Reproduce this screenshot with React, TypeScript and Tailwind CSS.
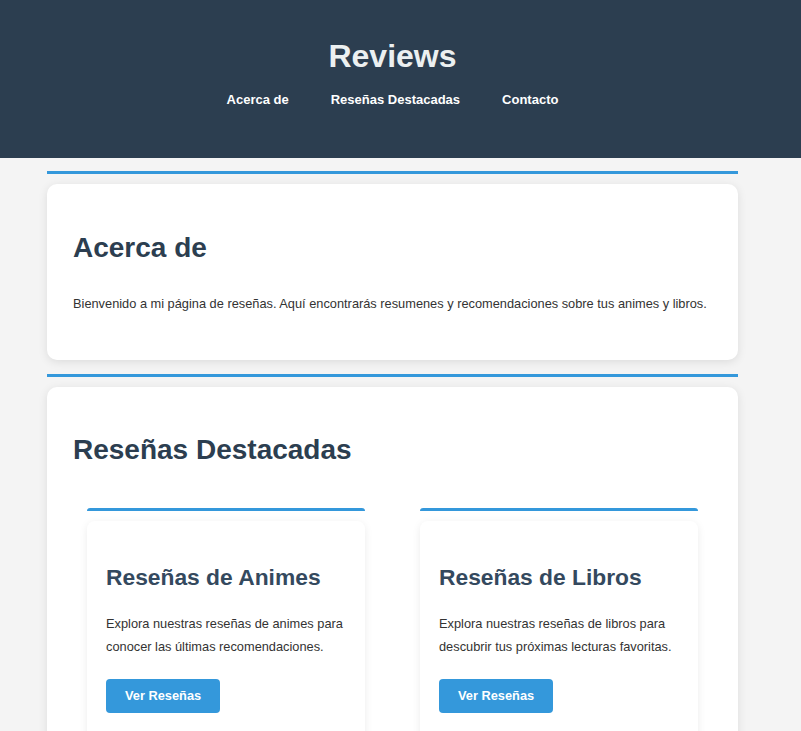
import React from 'react';

const heading = "font-['Liberation_Sans',Arial,sans-serif]";

const ReviewCard: React.FC<{ title: string; text: string }> = ({ title, text }) => (
  <div className="flex flex-col">
    <div className="h-[3px] bg-[#3498db] rounded-t-[3px]"></div>
    <div className="mt-[10px] bg-white rounded-[8px] shadow-[0_2px_8px_rgba(0,0,0,0.08)] px-[19px] pt-[43px] pb-[30px]">
      <h3 className={`${heading} text-[22.8px] leading-[26px] font-bold text-[#34495e]`}>{title}</h3>
      <p className="mt-[22px] text-[12.8px] leading-[23px] text-[#333]">{text}</p>
      <button className="mt-[21px] h-[34px] px-[19px] rounded-[4px] bg-[#3498db] text-white text-[12.8px] font-bold">
        Ver Reseñas
      </button>
    </div>
  </div>
);

const App: React.FC = () => {
  return (
    <div className="min-h-[731px] bg-[#f4f4f4] font-['Liberation_Sans',Arial,sans-serif]">
      <header className="h-[158px] bg-[#2c3e50] pr-[16px] flex flex-col items-center">
        <h1 className="mt-[38px] text-[32px] leading-[37px] font-bold text-[#ecf0f1]">Reviews</h1>
        <nav className="mt-[17px] flex gap-[42px] text-[13px] leading-[15px] font-bold text-white">
          <a href="#acerca">Acerca de</a>
          <a href="#resenas">Reseñas Destacadas</a>
          <a href="#contacto">Contacto</a>
        </nav>
      </header>

      <main className="ml-[47px] w-[691px] pt-[13px]">
        <section id="acerca">
          <div className="h-[3px] bg-[#3498db]"></div>
          <div className="mt-[10px] bg-white rounded-[10px] shadow-[0_2px_10px_rgba(0,0,0,0.1)] px-[26px] pt-[48px] pb-[46px]">
            <h2 className={`${heading} text-[28px] leading-[32px] font-bold text-[#2c3e50]`}>Acerca de</h2>
            <p className="mt-[30px] text-[12.8px] leading-[20px] text-[#333]">
              Bienvenido a mi página de reseñas. Aquí encontrarás resumenes y recomendaciones sobre tus animes y libros.
            </p>
          </div>
        </section>

        <section id="resenas" className="mt-[14px]">
          <div className="h-[3px] bg-[#3498db]"></div>
          <div className="mt-[10px] bg-white rounded-[10px] shadow-[0_2px_10px_rgba(0,0,0,0.1)] px-[26px] pt-[47px] pb-[30px]">
            <h2 className={`${heading} text-[28px] leading-[32px] font-bold text-[#2c3e50]`}>Reseñas Destacadas</h2>
            <div className="mt-[42px] mx-[14px] grid grid-cols-2 gap-[55px]">
              <ReviewCard
                title="Reseñas de Animes"
                text="Explora nuestras reseñas de animes para conocer las últimas recomendaciones."
              />
              <ReviewCard
                title="Reseñas de Libros"
                text="Explora nuestras reseñas de libros para descubrir tus próximas lecturas favoritas."
              />
            </div>
          </div>
        </section>
      </main>
    </div>
  );
};

export default App;
